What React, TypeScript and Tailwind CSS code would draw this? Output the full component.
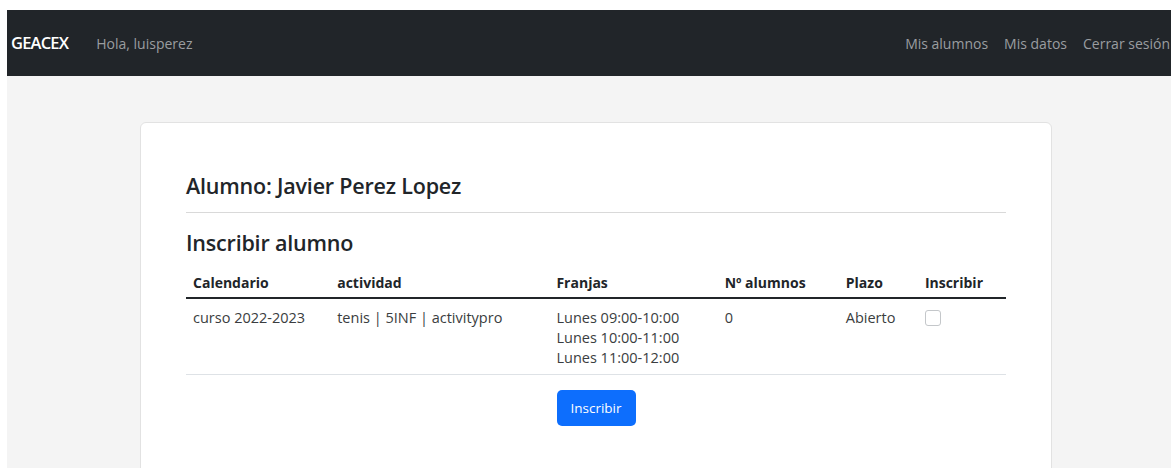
import React from 'react'

type Fila = {
  calendario: string
  actividad: string
  franjas: string[]
  alumnos: number
  plazo: string
}

const filas: Fila[] = [
  {
    calendario: 'curso 2022-2023',
    actividad: 'tenis | 5INF | activitypro',
    franjas: ['Lunes 09:00-10:00', 'Lunes 10:00-11:00', 'Lunes 11:00-12:00'],
    alumnos: 0,
    plazo: 'Abierto',
  },
]

const columnas = ['Calendario', 'actividad', 'Franjas', 'Nº alumnos', 'Plazo', 'Inscribir']
const anchos = ['w-[144px]', 'w-[219px]', 'w-[168px]', 'w-[121px]', 'w-[79px]', 'w-[88px]']

const App: React.FC = () => {
  return (
    <div className="min-h-screen bg-white pl-[7px] pt-[10px] font-['Open_Sans',sans-serif] text-[#212529]">
      {/* barra superior */}
      <nav className="h-[66px] bg-[#212529] flex items-center justify-between pl-[4px]">
        <div className="flex items-center">
          <span className="text-[16.5px] font-semibold text-white tracking-[-0.8px]">GEACEX</span>
          <span className="ml-[28px] text-[14px] text-[#9a9da0]">Hola, luisperez</span>
        </div>
        <div className="flex items-center gap-[16px] text-[14px] text-[#9a9da0] whitespace-nowrap mr-[1px]">
          <span>Mis alumnos</span>
          <span>Mis datos</span>
          <span>Cerrar sesión</span>
        </div>
      </nav>

      <main className="bg-[#f4f4f4] h-[392px] overflow-hidden pt-[46px] pl-[133px]">
        <div className="w-[912px] h-[400px] bg-white border border-[#e2e2e2] rounded-[6px] px-[45px] pt-[50px]">
          <h4 className="text-[21.5px] leading-[26px] font-semibold tracking-[-0.2px]">Alumno: Javier Perez Lopez</h4>
          <hr className="mt-[13px] border-0 border-t border-[#d9d9d9]" />
          <h4 className="mt-[17px] text-[21.5px] leading-[26px] font-semibold tracking-[-0.2px]">Inscribir alumno</h4>

          <table className="mt-[12px] w-full table-fixed border-collapse">
            <thead>
              <tr className="border-b-2 border-[#212529] text-[14px]">
                {columnas.map((c, i) => (
                  <th key={c} className={`${anchos[i]} h-[30px] px-[7px] text-left font-bold align-middle`}>
                    {c}
                  </th>
                ))}
              </tr>
            </thead>
            <tbody>
              {filas.map((f) => (
                <tr key={f.actividad} className="border-b border-[#dee2e6] align-top text-[14.5px] leading-[20px] text-[#3a3d40]">
                  <td className="px-[7px] pt-[9px] pb-[6px]">{f.calendario}</td>
                  <td className="px-[7px] pt-[9px] pb-[6px]">{f.actividad}</td>
                  <td className="px-[7px] pt-[9px] pb-[6px]">
                    {f.franjas.map((fr) => (
                      <div key={fr}>{fr}</div>
                    ))}
                  </td>
                  <td className="px-[7px] pt-[9px] pb-[6px]">{f.alumnos}</td>
                  <td className="px-[7px] pt-[9px] pb-[6px]">{f.plazo}</td>
                  <td className="px-[7px] pt-[11px] pb-[6px]">
                    <div className="w-[16px] h-[16px] rounded-[3px] border border-[#c4c7ca] bg-white" />
                  </td>
                </tr>
              ))}
            </tbody>
          </table>

          <div className="mt-[15px] flex justify-center">
            <button className="w-[79px] h-[36px] rounded-[5px] bg-[#0d6efd] text-white text-[13.5px]">
              Inscribir
            </button>
          </div>
        </div>
      </main>
    </div>
  )
}

export default App
